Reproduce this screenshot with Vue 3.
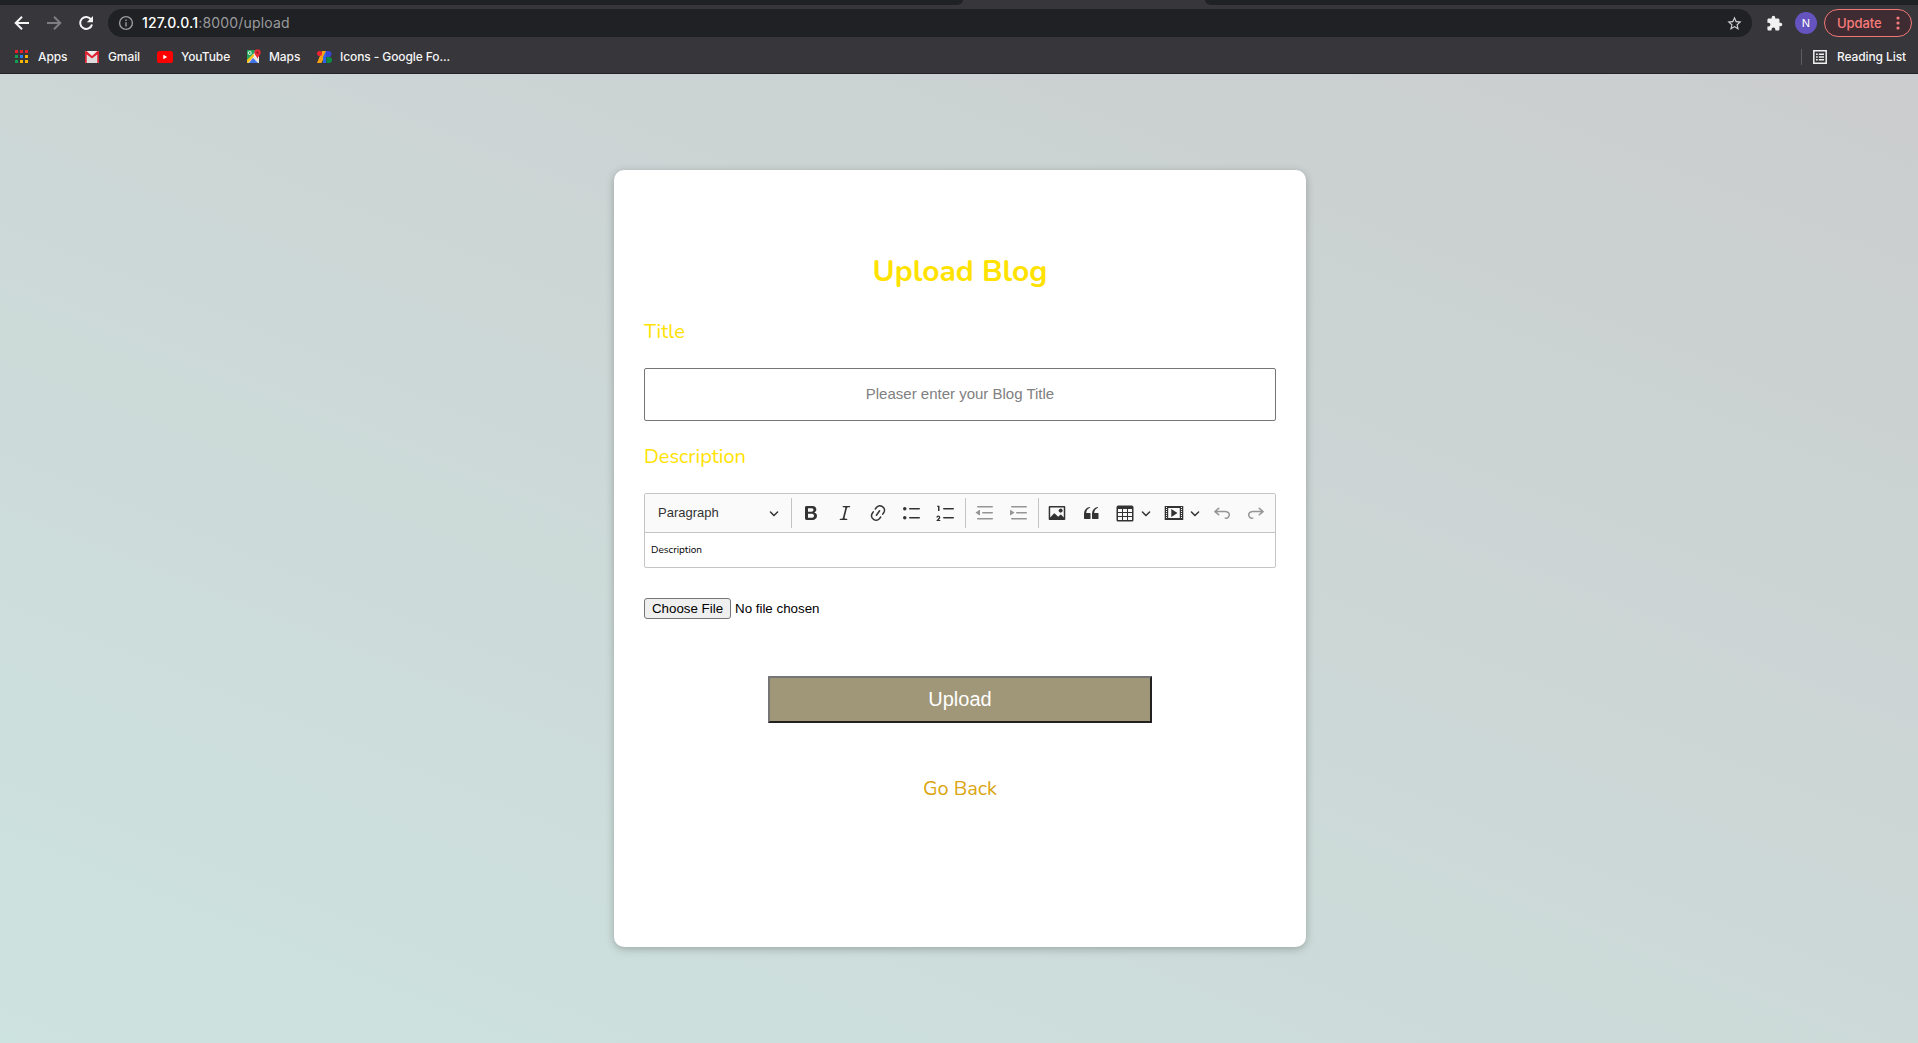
<script setup>
const line = (y) => `M7 ${y}c0 .414.336.75.75.75h9.5a.75.75 0 1 0 0-1.5h-9.5a.75.75 0 0 0-.75.75z`
const bars = 'M2 3.75c0 .414.336.75.75.75h14.5a.75.75 0 1 0 0-1.5H2.75a.75.75 0 0 0-.75.75zm5 6c0 .414.336.75.75.75h9.5a.75.75 0 1 0 0-1.5h-9.5a.75.75 0 0 0-.75.75zM2.75 16.5h14.5a.75.75 0 1 0 0-1.5H2.75a.75.75 0 1 0 0 1.5z'
const holes = [4, 6, 8, 10, 12, 14].map((y) => `M2 ${y}v1h1v-1zM17 ${y}v1h1v-1z`).join('')
const undo = 'm5.042 9.367 2.189 1.837a.75.75 0 0 1-.965 1.149l-3.788-3.18a.747.747 0 0 1-.21-.284.75.75 0 0 1 .17-.945L6.23 4.762a.75.75 0 1 1 .964 1.15L4.863 7.866h8.917A.75.75 0 0 1 14 7.9a4 4 0 1 1-1.477 7.718l.344-1.489a2.5 2.5 0 1 0 1.094-4.73l.008-.032H5.042z'
const chevron = 'M.941 4.523a.75.75 0 1 1 1.06-1.06l3.006 3.005 3.005-3.005a.75.75 0 1 1 1.06 1.06l-3.549 3.55a.75.75 0 0 1-1.168-.136L.941 4.523z'

const groups = [
  [
    { name: 'bold', d: 'M10.187 17H5.773c-.637 0-1.092-.138-1.364-.415-.273-.277-.409-.718-.409-1.323V4.738c0-.617.14-1.062.419-1.332.279-.27.73-.406 1.354-.406h4.68c.69 0 1.288.041 1.793.124.506.083.96.242 1.36.478.341.197.644.447.906.75a3.262 3.262 0 0 1 .808 2.162c0 1.401-.722 2.426-2.167 3.075C15.05 10.175 16 11.315 16 13.01a3.756 3.756 0 0 1-2.296 3.504 6.1 6.1 0 0 1-1.517.377c-.571.073-1.238.11-2 .11zm-.217-6.217H7v4.087h3.069c1.977 0 2.965-.69 2.965-2.072 0-.707-.256-1.22-.768-1.537-.512-.319-1.277-.478-2.296-.478zM7 5.13v3.619h2.606c.729 0 1.292-.067 1.69-.2a1.6 1.6 0 0 0 .91-.765c.165-.267.247-.566.247-.897 0-.707-.26-1.176-.778-1.409-.519-.232-1.31-.348-2.375-.348H7z' },
    { name: 'italic', d: 'm9.586 14.633.021.004c-.036.335.095.655.393.962.082.083.173.15.274.201h1.474a.6.6 0 1 1 0 1.2H5.304a.6.6 0 0 1 0-1.2h1.15c.474-.07.809-.182 1.005-.334.157-.122.291-.32.404-.597l2.416-9.55a1.053 1.053 0 0 0-.281-.823 1.12 1.12 0 0 0-.442-.296H8.15a.6.6 0 0 1 0-1.2h6.443a.6.6 0 1 1 0 1.2h-1.195c-.376.056-.65.155-.823.296-.215.175-.423.439-.623.79l-2.366 9.347z' },
    { name: 'link', d: 'm11.077 15 .991-1.416a.75.75 0 1 1 1.229.86l-1.148 1.64a.748.748 0 0 1-.217.206 5.251 5.251 0 0 1-8.503-5.955.741.741 0 0 1 .12-.274l1.147-1.639a.75.75 0 1 1 1.228.86L4.933 10.7l.006.003a3.75 3.75 0 0 0 6.132 4.294l.006.004zm5.494-5.335a.748.748 0 0 1-.12.274l-1.147 1.639a.75.75 0 1 1-1.228-.86l.86-1.23a3.75 3.75 0 0 0-6.144-4.301l-.86 1.229a.75.75 0 0 1-1.229-.86l1.148-1.64a.748.748 0 0 1 .217-.206 5.251 5.251 0 0 1 8.503 5.955zm-4.563-2.532a.75.75 0 0 1 .184 1.045l-3.155 4.505a.75.75 0 1 1-1.229-.86l3.155-4.506a.75.75 0 0 1 1.045-.184z' },
    { name: 'bullets', d: line(5.75) + line(14.75) + 'M1 5.75a1.75 1.75 0 1 0 3.5 0 1.75 1.75 0 1 0-3.5 0zM1 14.75a1.75 1.75 0 1 0 3.5 0 1.75 1.75 0 1 0-3.5 0z' },
    { name: 'numbers', d: line(5.75) + line(14.75) + 'M3.5 3v5H2V3.7H1v-1h2.5V3zM.343 17.857l2.59-3.257H2.92a.6.6 0 1 0-1.04 0H.302a2 2 0 1 1 3.995 0h-.001c-.048.405-.16.734-.333.988-.175.254-.59.692-1.244 1.312H4.3v1h-4l.043-.043z' },
  ],
  [
    { name: 'outdent', off: true, d: bars + 'M5 7.275v4.617a.4.4 0 0 1-.618.336L.994 10.02a.4.4 0 0 1-.013-.66l3.39-2.41A.4.4 0 0 1 5 7.275z' },
    { name: 'indent', off: true, d: bars + 'M1.632 6.95 5.02 9.358a.4.4 0 0 1-.013.661l-3.39 2.207A.4.4 0 0 1 1 11.892V7.275a.4.4 0 0 1 .632-.326z' },
  ],
  [
    { name: 'image', d: 'M6.91 10.54c.26-.23.64-.21.88.03l3.36 3.14 2.23-2.06a.64.64 0 0 1 .87 0l2.52 2.97V4.5H3.2v10.12l3.71-4.08zm10.27-7.51c.6 0 1.09.47 1.09 1.05v11.84c0 .59-.49 1.06-1.09 1.06H2.79c-.6 0-1.09-.47-1.09-1.06V4.08c0-.58.49-1.05 1.1-1.05h14.38zm-5.22 5.56a1.96 1.96 0 1 1 3.4-1.96 1.96 1.96 0 0 1-3.4 1.96z' },
    { name: 'quote', d: 'M3 10.423a6.5 6.5 0 0 1 6.056-6.408l.038.67C6.448 5.423 5.354 7.663 5.22 10H9c.552 0 .5.432.5.986v4.511c0 .554-.448.503-1 .503h-5c-.552 0-.5-.449-.5-1.003v-4.574zm8 0a6.5 6.5 0 0 1 6.056-6.408l.038.67c-2.646.739-3.74 2.979-3.873 5.315H17c.552 0 .5.432.5.986v4.511c0 .554-.448.503-1 .503h-5c-.552 0-.5-.449-.5-1.003v-4.574z' },
    { name: 'table', menu: true, d: 'M3 6v3h4V6H3zm0 4v3h4v-3H3zm0 4v3h4v-3H3zm5 3h4v-3H8v3zm5 0h4v-3h-4v3zm4-4v-3h-4v3h4zm0-4V6h-4v3h4zm1.5 8a1.5 1.5 0 0 1-1.5 1.5H3A1.5 1.5 0 0 1 1.500 17V4c.222-.863 1.068-1.500 2-1.500h13c.932 0 1.778.637 2 1.500v13zM12 13v-3H8v3h4zm0-4V6H8v3h4z' },
    { name: 'media', menu: true, d: 'M.7 3.03h18.57v13.95H.7zM4.2 5v10h11.57V5zM7.3 6.1v7.8l6.2-3.9z' + holes },
    { name: 'undo', off: true, d: undo },
    { name: 'redo', off: true, flip: true, d: undo },
  ],
]
const appDots = ['#e8202c', '#e8202c', '#e8202c', '#12a150', '#2b7cf5', '#f7b500', '#12a150', '#f7b500', '#f7b500']
</script>

<template>
  <div class="screen">
    <header class="chrome">
      <div class="tabs"><i class="tab-left"></i><i class="tab-active"></i><i class="tab-right"></i></div>
      <div class="navbar">
        <svg class="nav" viewBox="0 0 16 16"><path d="M15 8H2M8 1.700 1.700 8 8 14.300" /></svg>
        <svg class="nav dim" viewBox="0 0 16 16"><path d="M1 8h13M8 1.700 14.300 8 8 14.300" /></svg>
        <svg class="nav" viewBox="0 0 16 16"><path d="M13.200 4.600A6 6 0 1 0 14 9.400" /><path class="solid" d="M15 1v6.200H8.800z" /></svg>
        <div class="address">
          <svg class="info" viewBox="0 0 16 16"><circle cx="8" cy="8" r="6.400" /><path d="M8 7.200v4.200M8 4.400v1.700" /></svg>
          <span class="url"><b>127.0.0.1</b>:8000/upload</span>
          <svg class="star" viewBox="0 0 24 24"><path d="M22 9.24l-7.19-.62L12 2 9.19 8.63 2 9.24l5.46 4.73L5.82 21 12 17.27 18.18 21l-1.63-7.03L22 9.24zM12 15.4l-3.76 2.27 1-4.28-3.32-2.88 4.38-.38L12 6.1l1.71 4.04 4.38.38-3.32 2.88 1 4.28L12 15.4z" /></svg>
        </div>
        <svg class="puzzle" viewBox="0 0 24 24"><path d="M20.5 11H19V7c0-1.1-.9-2-2-2h-4V3.5a2.5 2.5 0 0 0-5 0V5H4c-1.1 0-2 .9-2 2v3.8h1.5a2.7 2.7 0 0 1 0 5.4H2V20c0 1.1.9 2 2 2h3.8v-1.5a2.7 2.7 0 0 1 5.4 0V22H17c1.1 0 2-.9 2-2v-4h1.5a2.5 2.5 0 0 0 0-5z" /></svg>
        <span class="avatar">N</span>
        <span class="update">Update<svg viewBox="0 0 4 16"><circle cx="2" cy="3" r="1.600" /><circle cx="2" cy="8" r="1.600" /><circle cx="2" cy="13" r="1.600" /></svg></span>
      </div>
      <nav class="bookmarks">
        <span class="bm apps"><i class="dots"><i v-for="(c, i) in appDots" :key="i" :style="{ background: c }"></i></i>Apps</span>
        <span class="bm gmail">
          <svg width="14" height="12" viewBox="0 0 15 12" preserveAspectRatio="none"><rect width="15" height="12" rx="1" fill="#eee" /><path d="M2.500 12V4l5 4 5-4v8z" fill="#dcdcdc" /><path d="M0 1v10q0 1 1 1h.9V3.400L7.500 7.600l5.600-4.200V12H14q1 0 1-1V1q0-1-1-1h-.6L7.500 5 1.600 0H1Q0 0 0 1z" fill="#de2434" /></svg>Gmail</span>
        <span class="bm youtube">
          <svg width="16" height="12" viewBox="0 0 16 12"><rect width="16" height="12" rx="2.600" fill="#f00" /><path d="M6.300 3.700v4.600L10.200 6z" fill="#fff" /></svg>YouTube</span>
        <span class="bm maps">
          <svg width="15" height="15" viewBox="0 0 15 15"><path d="M1 1h12v13H1z" fill="#f2f2f2" /><path d="M1 1h10L1 12z" fill="#24a45a" /><path d="M1 12 7 6l6 7v1H1z" fill="#e9e4d5" /><path d="M3 14l4-5 5 5z" fill="#4274eb" /><path d="M1 11l6-6 1.400 1.500L2 14H1z" fill="#fbc41d" /><circle cx="3.700" cy="4" r="1.500" fill="none" stroke="#fff" stroke-width=".9" /><path d="M11.500 10C11.200 7.500 8.300 6 8.300 3.500a3.200 3.200 0 0 1 6.400 0C14.700 6 11.800 7.500 11.500 10z" fill="#e32a35" /><circle cx="11.500" cy="3.600" r="1.100" fill="#871b22" /></svg>Maps</span>
        <span class="bm fonts">
          <svg width="15" height="12" viewBox="0 0 15 12"><path d="M5 0h4v3L4.500 12H0z" fill="#f9a112" /><path d="M9 0v12H6V6z" fill="#2d63e8" /><circle cx="2.500" cy="2.500" r="2.500" fill="#ee2434" /><path d="M9 0h2.500a3 3 0 0 1 0 6H9z" fill="#3448d5" /><path d="M9.500 6H12a3 3 0 0 1 0 6H9.500z" fill="#0d8b43" /></svg>Icons - Google Fo...</span>
        <span class="reading">
          <svg width="14" height="14" viewBox="0 0 14 14"><path d="M.8.8h12.400v12.400H.8z" fill="none" stroke="#f1f1f1" stroke-width="1.500" /><path d="M3 4.200h1.700M3 7h1.700M3 9.800h1.700M5.800 4.200H11M5.800 7H11M5.800 9.800H11" stroke="#f1f1f1" stroke-width="1.400" /></svg>Reading List</span>
      </nav>
    </header>

    <main class="page">
      <form class="card" @submit.prevent>
        <h1>Upload Blog</h1>
        <label class="title-label">Title</label>
        <input class="title-input" type="text" placeholder="Pleaser enter your Blog Title" />
        <label class="desc-label">Description</label>
        <div class="editor">
          <div class="toolbar">
            <span class="heading"><span>Paragraph</span><svg class="chev" viewBox="0 0 10 10"><path :d="chevron" /></svg></span>
            <template v-for="(group, g) in groups" :key="g">
              <i class="sep"></i>
              <span v-for="tool in group" :key="tool.name" class="tool" :class="{ off: tool.off, menu: tool.menu, flip: tool.flip }">
                <svg class="glyph" viewBox="0 0 20 20"><path :fill-rule="tool.name === 'media' ? 'evenodd' : 'nonzero'" :d="tool.d" /></svg>
                <svg v-if="tool.menu" class="chev" viewBox="0 0 10 10"><path :d="chevron" /></svg>
              </span>
            </template>
          </div>
          <div class="content">Description</div>
        </div>
        <div class="file"><button type="button">Choose File</button><span>No file chosen</span></div>
        <button class="submit" type="submit">Upload</button>
        <a class="back">Go Back</a>
      </form>
    </main>
  </div>
</template>

<style>
body { margin: 0; overflow: hidden; }
</style>

<style scoped>
.screen { height: 1043px; display: flex; flex-direction: column; font-family: Inter, "Liberation Sans", sans-serif; }
.chrome { height: 74px; box-sizing: border-box; background: #37363b; border-bottom: 1px solid #232327; color: #f5f5f5; }
.tabs { height: 5px; display: flex; background: #37363b; }
.tab-left { width: 963px; background: #202124; border-bottom-right-radius: 6px 5px; }
.tab-active { width: 242px; }
.tab-right { flex: 1; background: #202124; border-bottom-left-radius: 6px 5px; }
.navbar { height: 36px; display: flex; align-items: center; padding: 0 6px 0 14px; }
.nav { width: 16px; height: 16px; margin-right: 16px; fill: none; stroke: #f5f5f5; stroke-width: 2; }
.nav .solid { fill: #f5f5f5; stroke: none; }
.nav.dim { stroke: #7e7d81; }
.address { width: 1644px; height: 28px; margin-left: -2px; box-sizing: border-box; border-radius: 14px; background: #202124; display: flex; align-items: center; padding: 0 9px 0 10px; }
.info { width: 16px; height: 16px; fill: none; stroke: #9a9da1; stroke-width: 1.4; }
.url { flex: 1; margin-left: 8px; font-size: 14px; line-height: 18px; padding-bottom: 1px; color: #9a9b9e; letter-spacing: .18px; white-space: nowrap; }
.url b { font-weight: 500; color: #fff; }
.star { width: 17px; height: 17px; fill: #d0d1d3; }
.puzzle { width: 17px; height: 17px; margin-left: 14px; fill: #f1f1f1; }
.avatar { width: 22px; height: 22px; margin-left: 12px; border-radius: 50%; background: #6554c0; font-size: 11px; line-height: 22px; text-align: center; color: #fff; }
.update { width: 88px; height: 28px; margin-left: 7px; box-sizing: border-box; border: 1px solid #f27878; border-radius: 14px; background: #3f2c32; color: #f87b7b; display: flex; align-items: center; justify-content: space-between; padding: 0 11px 0 12px; font-size: 13px; font-weight: 500; letter-spacing: -.1px; }
.update svg { width: 4px; height: 16px; fill: #f87b7b; }
.bookmarks { height: 31px; display: flex; align-items: center; padding: 0 12px 0 15px; font-size: 12px; font-weight: 500; letter-spacing: -.1px; white-space: nowrap; }
.bm { display: flex; align-items: center; gap: 8px; }
.apps { width: 70px; gap: 10px; }
.gmail { width: 72px; gap: 9px; }
.youtube { width: 89px; }
.maps { width: 71px; }
.fonts { flex: 1; }
.dots { display: grid; grid-template-columns: repeat(3, 3px); grid-auto-rows: 3px; gap: 2px; }
.reading { display: flex; align-items: center; gap: 10px; height: 16px; border-left: 1px solid #5f5e63; padding-left: 11px; }

.page { flex: 1; display: flex; justify-content: center; align-items: flex-start; padding: 96px 0 0 2px; background: linear-gradient(22deg, #cde3df, #cbcdce); }
.card { width: 692px; height: 777px; box-sizing: border-box; padding: 76px 30px 0; display: flex; flex-direction: column; border-radius: 10px; background: #fff; box-shadow: 0 2px 8px rgba(0, 0, 0, .25); font-family: Nunito, Lato, sans-serif; }
h1 { margin: 0; height: 50px; line-height: 51px; text-align: center; font-size: 30px; font-weight: 700; color: #ffe200; }
.title-label, .desc-label { height: 28px; line-height: 30px; font-size: 20px; color: #ffe200; }
.title-label { margin-top: 21px; }
.title-input { margin-top: 23px; width: 632px; height: 53px; box-sizing: border-box; padding: 0 2px 2px; border: 1px solid #767676; border-radius: 2px; text-align: center; font: 15px "Liberation Sans", sans-serif; outline: none; }
.title-input::placeholder { color: #808080; }
.desc-label { margin-top: 21px; }
.editor { margin-top: 23px; height: 75px; box-sizing: border-box; border: 1px solid #c4c4c4; border-radius: 2px; }
.toolbar { height: 38px; display: flex; align-items: center; background: #fafafa; border-bottom: 1px solid #c4c4c4; }
.heading { width: 121px; display: flex; align-items: center; justify-content: space-between; padding: 0 11px 0 13px; font: 13px "Liberation Sans", sans-serif; color: #333; margin-right: 1px; }
.heading span { padding-bottom: 2px; }
.chev { width: 10px; height: 10px; fill: #333; }
.sep { width: 1px; height: 30px; margin: 0 2px 0 0; background: #c4c4c4; }
.tool { width: 33.8px; display: flex; align-items: center; justify-content: center; }
.tool + .sep { margin-left: 2px; }
.tool.menu { width: 48.6px; justify-content: flex-start; padding-left: 7px; box-sizing: border-box; }
.tool.menu .chev { margin-left: 6px; }
.glyph { width: 20px; height: 20px; fill: #333; flex: none; }
.off .glyph { opacity: .5; }
.flip .glyph { transform: scaleX(-1); }
.content { padding: 0 6px; line-height: 34px; font-size: 10px; color: #000; }
.file { margin-top: 30px; height: 21px; display: flex; align-items: center; font: 13.333px "Liberation Sans", sans-serif; color: #000; }
.file button { width: 87px; height: 21px; padding: 0; border: 1px solid #767676; border-radius: 3px; background: #efefef; font: inherit; color: #000; margin-right: 4px; }
.submit { align-self: center; width: 384px; height: 47px; margin-top: 57px; border: 2px solid; border-color: #767676 #212121 #212121 #767676; background: #a09678; color: #fff; font: 20px "Liberation Sans", sans-serif; }
.back { align-self: center; margin-top: 52px; line-height: 28px; font-size: 20px; color: #daa50f; }
</style>
